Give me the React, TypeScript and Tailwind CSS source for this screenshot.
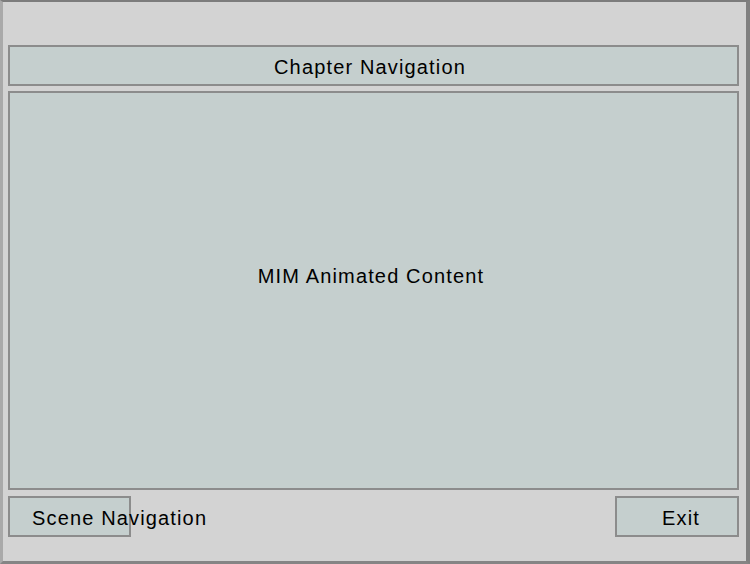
import React from "react";

export default function App() {
  const font = { fontFamily: '"Liberation Sans", Arial, sans-serif' };
  return (
    <div
      className="w-[750px] h-[564px] bg-[#d3d3d3] border-t-2 border-t-[#7c7c7c] border-l-[3px] border-l-[#a9a9a9] border-r-4 border-r-[#808080] border-b-[3px] border-b-[#858585] pt-[43px] pl-[5px] pr-[7px] pb-[24px] flex flex-col text-[20px] tracking-[1.15px] text-black"
      style={font}
    >
      <div className="h-[41px] shrink-0 border-2 border-[#8c8c8c] bg-[#c5cfce] flex items-center justify-center pt-[3px] pr-[7px]">
        Chapter Navigation
      </div>
      <div className="mt-[5px] flex-1 border-2 border-[#8c8c8c] bg-[#c5cfce] flex justify-center pt-[168px] pr-[5px]">
        MIM Animated Content
      </div>
      <div className="mt-[6px] h-[41px] shrink-0 flex justify-between">
        <div className="w-[123px] h-full border-2 border-[#8c8c8c] bg-[#c5cfce] flex items-center pl-[22px] whitespace-nowrap pt-[3px]">
          Scene Navigation
        </div>
        <div className="w-[124px] h-full border-2 border-[#8c8c8c] bg-[#c5cfce] flex items-center justify-center pl-[8px] pt-[3px]">
          Exit
        </div>
      </div>
    </div>
  );
}
